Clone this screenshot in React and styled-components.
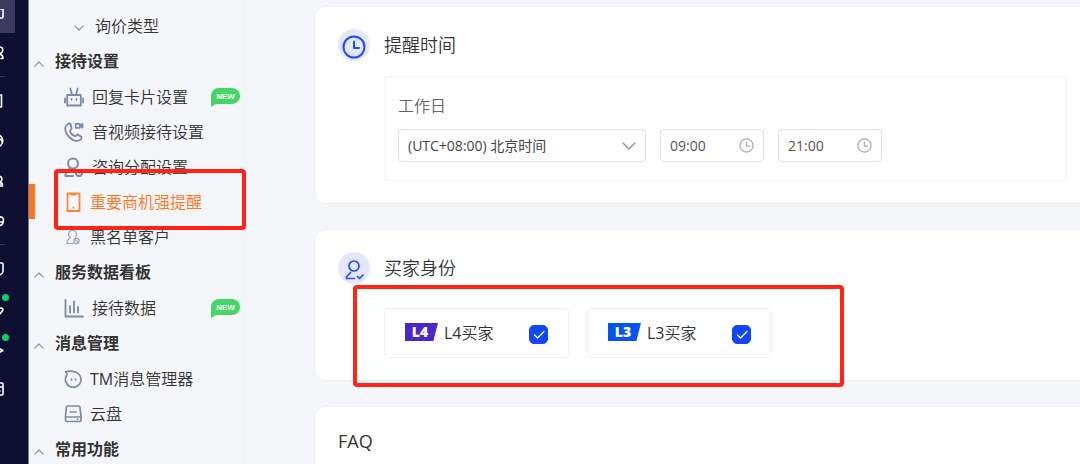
import React from "react";
import styled, { createGlobalStyle, css } from "styled-components";

const Global = createGlobalStyle`
  * { box-sizing: border-box; }
  html, body { margin: 0; background: #f5f6fa; }
  body, button, input, select {
    font-family: "Open Sans", "Noto Sans CJK SC", sans-serif;
    color: #333;
  }
  body { overflow: hidden; font-weight: 350; }
`;

const Page = styled.div`
  display: flex;
  height: 100vh;
  overflow: hidden;
`;

const Rail = styled.nav`
  width: 29px;
  flex: none;
  display: flex;
  flex-direction: column;
  align-items: flex-start;
  background: #0f0f33;
  border-right: 1px solid #777b92;
`;

const RailButton = styled.button`
  width: 15px;
  height: ${(p) => p.$h || 40}px;
  flex: none;
  padding: 0;
  border: 0;
  display: flex;
  align-items: center;
  position: relative;
  background: ${(p) => (p.$active ? "#3c3a5e" : "transparent")};
  svg { display: block; }
`;

const RailLine = styled.hr`
  width: 5px;
  height: 1px;
  flex: none;
  margin: 3px 0 4px;
  border: 0;
  background: #34345a;
`;

const Dot = styled.span`
  position: absolute;
  left: 2px;
  top: 5px;
  width: 7px;
  height: 7px;
  border-radius: 50%;
  background: #00d564;
`;

const Side = styled.nav`
  width: 215px;
  flex: none;
  padding-top: 8px;
  border-right: 1px solid #f0f1f6;
`;

const GroupTitle = styled.button`
  width: 100%;
  height: 36px;
  padding: 0 0 0 5px;
  border: 0;
  background: none;
  display: flex;
  align-items: center;
  gap: 11px;
  font-size: 16px;
  line-height: 24px;
  font-weight: 700;
  svg { margin-top: 5px; }
`;

const Item = styled.a`
  height: 35px;
  padding-left: 35px;
  display: flex;
  align-items: center;
  gap: 8px;
  position: relative;
  font-size: 16px;
  line-height: 24px;
  color: #333;
  text-decoration: none;
  white-space: nowrap;
  ${(p) => p.$sub && css`
    padding-left: 45px;
    gap: 11px;
    svg { margin-top: 4px; }
  `}
  ${(p) => p.$active && css`
    color: #ff7519;
    padding-left: 29px;
    border-left: 6px solid #ff7519;
  `}
  svg { flex: none; }
`;

const Latin = styled.span`
  font-weight: 400;
`;

const Badge = styled.span`
  position: relative;
  margin: 0 3px 2px auto;
  width: 29px;
  height: 16px;
  border-radius: 8px 8px 8px 0;
  background: #45d668;
  color: #fff;
  font: 700 8px/17px "Liberation Sans", sans-serif;
  text-align: center;
  &::after {
    content: "";
    position: absolute;
    left: 0;
    top: 100%;
    border-top: 3px solid #45d668;
    border-right: 5px solid transparent;
  }
`;

const Mark = styled.span`
  position: absolute;
  z-index: 2;
  border: 4px solid #ff2416;
  border-radius: 4px;
  pointer-events: none;
`;
const ItemMark = styled(Mark)`
  inset: -15px -3px -11px 19px;
`;
const OptionsMark = styled(Mark)`
  inset: -23px -72px -29px -31px;
`;

const Main = styled.main`
  flex: 1;
  min-width: 0;
  padding: 6px 0 0 70px;
  display: flex;
  flex-direction: column;
  gap: 25px;
`;

const Card = styled.section`
  flex: none;
  padding: 22px 13px 22px 23px;
  border: 1px solid #eff0f4;
  border-right: 0;
  border-radius: 12px 0 0 12px;
  background: #fff;
`;

const CardHead = styled.header`
  display: flex;
  align-items: center;
  gap: 14px;
  height: 32px;
`;

const Circle = styled.span`
  width: 32px;
  height: 32px;
  padding-top: 3px;
  border-radius: 50%;
  background: #e5e7ff;
  display: grid;
  place-items: center;
`;

const Title = styled.h2`
  margin: 0;
  font-size: 18px;
  line-height: 24px;
  font-weight: 350;
`;

const Panel = styled.div`
  margin: 15px 0 0 46px;
  padding: 16px 13px 18px;
  border: 1px solid #f3f3f4;
  border-radius: 4px;
`;

const PanelLabel = styled.div`
  font-size: 16px;
  line-height: 26px;
  color: #666;
  margin-bottom: 10px;
`;

const Fields = styled.div`
  display: flex;
  gap: 14px;
`;

const Field = styled.label`
  width: ${(p) => p.$w}px;
  height: 33px;
  display: flex;
  align-items: center;
  padding: 0 9px;
  border: 1px solid #dfe0e2;
  border-radius: 4px;
  background: #fff;
  svg { flex: none; }
`;

const fieldText = css`
  flex: 1;
  min-width: 0;
  padding: 0;
  border: 0;
  outline: 0;
  background: none;
  font-size: 14px;
  line-height: 20px;
  font-weight: 400;
  color: #555;
`;
const Select = styled.select`
  ${fieldText}
  appearance: none;
  color: #444;
`;
const TimeInput = styled.input`
  ${fieldText}
`;

const Options = styled.div`
  position: relative;
  width: fit-content;
  margin: 24px 0 0 46px;
  display: flex;
  gap: 18px;
`;

const Option = styled.label`
  width: 185px;
  height: 50px;
  padding: 0 20px;
  display: flex;
  align-items: center;
  border: 1px solid #f1f1f3;
  border-radius: 4px;
  font-size: 16px;
  line-height: 24px;
`;

const Level = styled.span`
  width: 33px;
  height: 18px;
  margin: 0 6px 2px 0;
  padding-right: 3px;
  clip-path: polygon(0 0, 100% 0, 86% 100%, 0 100%);
  background: ${(p) => p.$color};
  color: #fff;
  font-size: 14px;
  line-height: 18px;
  font-weight: 800;
  text-align: center;
`;

const CheckWrap = styled.span`
  margin: 2px 0 0 auto;
  display: grid;
  svg { grid-area: 1 / 1; pointer-events: none; }
`;
const Check = styled.input`
  grid-area: 1 / 1;
  appearance: none;
  width: 19px;
  height: 19px;
  margin: 0;
  border-radius: 5px;
  border: 1px solid #1146fa;
  background: #fff;
  &:checked { background: #1146fa; }
`;

const Svg = ({ w = 20, h = w, vb, c = "#7c8aa5", sw = 2, children }) => (
  <svg width={w} height={h} viewBox={vb || `0 0 ${w} ${h}`} fill="none" stroke={c}
    strokeWidth={sw} strokeLinecap="round" strokeLinejoin="round" aria-hidden="true">
    {children}
  </svg>
);

const Up = () => <Svg w={10} h={6} c="#8f95ab" sw={1.2}><path d="M.8 5.200 5 1l4.200 4.200" /></Svg>;
const Down = () => <Svg w={10} h={6} c="#8f95ab" sw={1.2}><path d="M.8.8 5 5l4.200-4.200" /></Svg>;

const icons = {
  robot: <Svg sw={1.8}><path d="M3.200 8h13.600v10.500H3.200zM7.800 7 6.300 1.500M12.200 7l1.500-5.500M1 11.500v4M19 11.500v4M7.500 12v.8M12.500 12v.8" /></Svg>,
  phone: <Svg sw={1.8}><path d="M4.500 1.500C1.500 3 0 7 2.500 11.500 5.500 17 11 20 15 18.500c2-.8 3-2.500 2.500-3.500L14 12.500c-1 0-1.700 1.700-2.700 1.700C9 13.500 6.500 11 6 9c0-1 1.700-1.800 1.700-2.800L6.500 2C6 1.500 5.500 1.300 4.500 1.500Z" /><path d="M11.800 1.800h4v4h-4zM16 3.500l2.500-1.500v3.600z" /></Svg>,
  assign: <Svg><circle cx="9" cy="6.500" r="5" /><path d="M5.500 11.500 1.500 16.500V19H9" /><circle cx="15" cy="16" r="3" /><circle cx="15" cy="16" r=".3" strokeWidth="1" /></Svg>,
  mobile: <Svg w={18} h={20} c="#ff8435" sw={1.8}><path d="M3.500 1.500h12v17.500h-12zM7.500 2.500h4M9.500 15.500v.2" /></Svg>,
  blocked: <Svg w={18} h={16} c="#98a2b6" sw={1.2}><path d="M6.500 8.800A4 4 0 1 1 11.500 8M6.500 9C4 10 2.800 12 2.800 14.500h6.500" /><circle cx="12.500" cy="12" r="2.600" /><path d="m10.800 10.200 3.600 3.600" /></Svg>,
  chart: <Svg sw={1.8}><path d="M1.500 2v16.500H19M6 8v6.500M10 3.500v11M14 9v5.500" /></Svg>,
  tm: <Svg w={18} h={20} sw={1.7}><path d="M1.500 2.800C6 1.500 11 2.500 14 4.300a7.800 7.800 0 1 1-11.500 2.200C3.500 5 3.500 4.500 1.500 2.800ZM7.500 10v1M11.500 10v1" /></Svg>,
  disk: <Svg w={18} h={20} sw={1.7}><path d="M3.500 2h11c1 0 1.300.5 1.400 1.200L17 12.500V16c0 1-.5 1.500-1.500 1.500h-12.500c-1 0-1.500-.5-1.500-1.500v-3.500L2.400 3.200C2.500 2.500 2.800 2 3.500 2ZM1.500 13h15M6.500 8h5.500M13.500 15.200v.1" /></Svg>,
};

const Clock = ({ w, c, sw }) => (
  <Svg w={w} vb="0 0 24 24" c={c} sw={sw}><circle cx="12" cy="12" r="10.500" /><path d="M12 6.500V13h5" /></Svg>
);

const Row = ({ icon, children, isNew, active }) => (
  <Item href="#" $active={active}>
    {icons[icon]}<span>{children}</span>
    {isNew && <Badge>NEW</Badge>}
    {active && <ItemMark />}
  </Item>
);
const Group = ({ children }) => <GroupTitle><Up />{children}</GroupTitle>;

const RI = ({ children }) => <Svg w={6} h={16} c="#fff" sw={1.6}>{children}</Svg>;

const Buyer = ({ level, color }) => (
  <Option>
    <Level $color={color}>{level}</Level>
    <span><Latin>{level}</Latin>买家</span>
    <CheckWrap>
      <Check type="checkbox" defaultChecked />
      <Svg w={19} c="#fff" sw={1.3}><path d="m5.500 10 3 3 6.500-6.500" /></Svg>
    </CheckWrap>
  </Option>
);

export default function App() {
  return (
    <>
      <Global />
      <Page>
        <Rail>
          <RailButton $active $h={33} aria-label="首页"><RI><path d="M-4 0h6q1 0 1 1v7q0 1-1 1h-6" /></RI></RailButton>
          <RailButton aria-label="客户"><RI><path d="M-2 2c6-1 6 5 1.500 7 2 .5 3.500 2 3.500 4.500h-2" /></RI></RailButton>
          <RailLine />
          <RailButton aria-label="商品"><RI><path d="M-4 2h5.500v12h-5.500" /></RI></RailButton>
          <RailButton aria-label="数据"><RI><path d="M-4 2c9-1 9 12 0 12M-1 6c2 0 3 1 3 3" /></RI></RailButton>
          <RailButton aria-label="会员"><RI><path d="M-2 3c5 0 5 5 1.500 6 2 0 3 1.500 3 4h-5M0 11h2" /></RI></RailButton>
          <RailButton aria-label="营销"><RI><path d="M-1 4c5-1 5 4 3.500 5h-4M-1 12.500c2 0 4-.5 4-3.500" /></RI></RailButton>
          <RailLine />
          <RailButton aria-label="订单"><RI><path d="M-4 2h6q1 0 1 1v7c0 2-2 4-5 4" /></RI></RailButton>
          <RailButton aria-label="物流"><RI><path d="M-2 8c2-1.500 5-1 5 .5s-2 2-2.500 4" /></RI><Dot /></RailButton>
          <RailButton aria-label="推广"><RI><path d="m-1 7.500 4 2-4 2" /></RI><Dot /></RailButton>
          <RailButton aria-label="财务"><RI><path d="M-4 2h6q1 0 1 1v10q0 1-1 1h-6M-4 6h6M-1 10h1" /></RI></RailButton>
        </Rail>
        <Side>
          <Item href="#" $sub><Down /><span>询价类型</span></Item>
          <Group>接待设置</Group>
          <Row icon="robot" isNew>回复卡片设置</Row>
          <Row icon="phone">音视频接待设置</Row>
          <Row icon="assign">咨询分配设置</Row>
          <Row icon="mobile" active>重要商机强提醒</Row>
          <Row icon="blocked">黑名单客户</Row>
          <Group>服务数据看板</Group>
          <Row icon="chart" isNew>接待数据</Row>
          <Group>消息管理</Group>
          <Row icon="tm"><Latin>TM</Latin>消息管理器</Row>
          <Row icon="disk">云盘</Row>
          <Group>常用功能</Group>
        </Side>
        <Main>
          <Card>
            <CardHead>
              <Circle><Clock w={24} c="#1f4bff" sw={2} /></Circle>
              <Title>提醒时间</Title>
            </CardHead>
            <Panel>
              <PanelLabel>工作日</PanelLabel>
              <Fields>
                <Field $w={248}>
                  <Select aria-label="时区"><option>(UTC+08:00) 北京时间</option></Select>
                  <Svg w={14} h={8} c="#999" sw={1.5}><path d="m1 1 6 6 6-6" /></Svg>
                </Field>
                <Field $w={104}><TimeInput aria-label="开始时间" defaultValue="09:00" /><Clock w={15} c="#aaa" sw={2} /></Field>
                <Field $w={104}><TimeInput aria-label="结束时间" defaultValue="21:00" /><Clock w={15} c="#aaa" sw={2} /></Field>
              </Fields>
            </Panel>
          </Card>
          <Card>
            <CardHead>
              <Circle>
                <Svg w={20} c="#1f4bff" sw={1.7}><circle cx="10" cy="6" r="5" /><path d="M6.500 12.500 2.500 17v1.500H10.500M13.500 16.500l2 2 3.500-3.500" /></Svg>
              </Circle>
              <Title>买家身份</Title>
            </CardHead>
            <Options>
              <Buyer level="L4" color="#4a27c9" />
              <Buyer level="L3" color="#0753ef" />
              <OptionsMark />
            </Options>
          </Card>
          <Card><Title><Latin>FAQ</Latin></Title></Card>
        </Main>
      </Page>
    </>
  );
}
